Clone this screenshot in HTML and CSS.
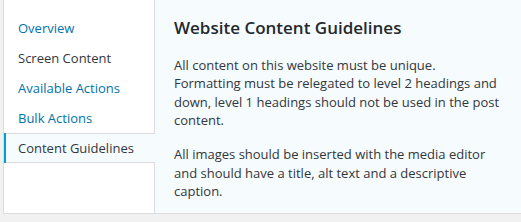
FILE: index.html
```html
<!DOCTYPE html>
<html lang="en">
<head>
  <meta charset="UTF-8" />
  <title>Help</title>
  <link rel="stylesheet" href="styles.css">
</head>
<body>
  <div class="help-wrap">
    <ul class="help-tabs">
      <li><a href="#">Overview</a></li>
      <li><a href="#" class="plain">Screen Content</a></li>
      <li><a href="#">Available Actions</a></li>
      <li><a href="#">Bulk Actions</a></li>
      <li class="active"><a href="#">Content Guidelines</a></li>
    </ul>
    <div class="help-content">
      <h2>Website Content Guidelines</h2>
      <p>All content on this website must be unique. Formatting must be relegated to level 2 headings and down, level 1 headings should not be used in the post content.</p>
      <p>All images should be inserted with the media editor and should have a title, alt text and a descriptive caption.</p>
    </div>
  </div>
</body>
</html>
```

FILE: styles.css
```css
body {
  margin: 0;
  background: #f1f1f1;
  font-family: "Open Sans", sans-serif;
  font-size: 13px;
  color: #32373c;
}

.help-wrap {
  display: flex;
  height: 213px;
  margin-left: 3px;
  border-left: 1px solid #dcdcdc;
  border-bottom: 1px solid #dcdcdc;
  background: #f6fbfd;
}

.help-tabs {
  width: 150px;
  flex-shrink: 0;
  margin: 0;
  padding: 13px 0 0;
  list-style: none;
  background: #fff;
  border-right: 1px solid #dcdcdc;
}

.help-tabs li {
  border-left: 2px solid transparent;
}

.help-tabs a {
  display: block;
  padding: 5px 5px 5px 12px;
  line-height: 18px;
  color: #0073aa;
  text-decoration: none;
  border-top: 1px solid transparent;
  border-bottom: 1px solid transparent;
}

.help-tabs a.plain {
  color: #32373c;
}

.help-tabs .active {
  margin-right: -1px;
  border-left-color: #00a0d2;
  background: #f6fbfd;
}

.help-tabs .active a {
  color: #32373c;
  border-color: #dcdcdc;
}

.help-content {
  padding: 0 20px 0 19px;
}

.help-content h2 {
  margin: 16px 0 0;
  font-size: 17px;
  font-weight: 600;
  line-height: 24px;
  color: #23282d;
}

.help-content p {
  margin: 16px 0 0;
  line-height: 18.4px;
}

.help-content p + p {
  margin-top: 15.5px;
}
```
